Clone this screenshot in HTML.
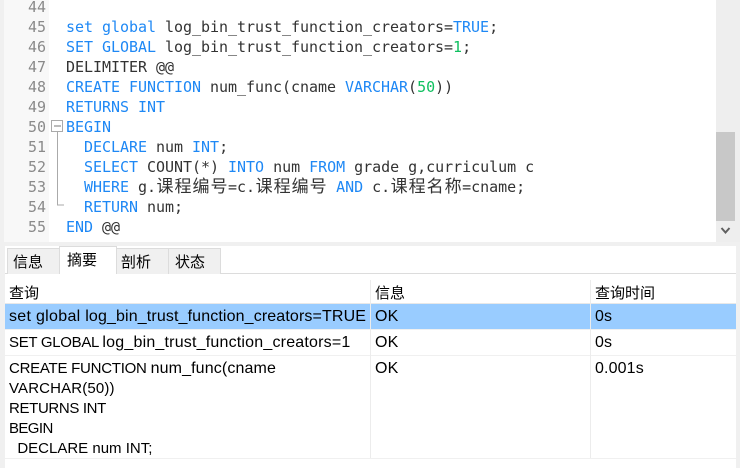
<!DOCTYPE html>
<html><head><meta charset="utf-8">
<style>
html,body{margin:0;padding:0;background:#f0f0f0;}
#r{position:relative;width:740px;height:468px;overflow:hidden;background:#f0f0f0;}
#r div{position:absolute;}
.ln{left:4px;width:42px;text-align:right;font:15px/20px "DejaVu Sans Mono","Noto Sans CJK SC",monospace;color:#8a8a8a;height:20px;white-space:pre;}
.c{left:66px;font:15px/20px "DejaVu Sans Mono","Noto Sans CJK SC",monospace;letter-spacing:-.03px;color:#333;height:20px;white-space:pre;}
.c b{font-weight:normal;color:#1e88f5;}
.c i{font-style:normal;color:#10c060;}
.cj{display:inline-block;width:18px;text-align:center;font-size:17px;line-height:20px;letter-spacing:0;}
.t{font:16px/20px "Liberation Sans","Noto Sans CJK SC",sans-serif;letter-spacing:.13px;color:#000;white-space:pre;height:20px;}
.t span{font-size:15px;letter-spacing:-.3px;}
.z{font-family:"Noto Sans CJK SC","Liberation Sans",sans-serif;font-size:15px;letter-spacing:0;}
.tab{box-sizing:border-box;border:1px solid #dcdcdc;border-bottom:none;background:#f0f0f0;text-align:center;font:15px/25px "Noto Sans CJK SC",sans-serif;color:#000;}
</style></head><body>
<div id="r">
<div style="left:4px;top:0;width:712px;height:242px;background:#fff"></div>
<div style="left:1px;top:0;width:48px;height:242px;background:#f8f8f8"></div>
<div style="left:0;top:0;width:4px;height:242px;background:#f0f0f0"></div>

<div class="ln" style="top:-3px">44</div>
<div class="ln" style="top:17px">45</div>
<div class="ln" style="top:37px">46</div>
<div class="ln" style="top:57px">47</div>
<div class="ln" style="top:77px">48</div>
<div class="ln" style="top:97px">49</div>
<div class="ln" style="top:117px">50</div>
<div class="ln" style="top:137px">51</div>
<div class="ln" style="top:157px">52</div>
<div class="ln" style="top:177px">53</div>
<div class="ln" style="top:197px">54</div>
<div class="ln" style="top:217px">55</div>

<div class="c" style="top:17px"><b>set global</b> log_bin_trust_function_creators=<b>TRUE</b>;</div>
<div class="c" style="top:37px"><b>SET GLOBAL</b> log_bin_trust_function_creators=<i>1</i>;</div>
<div class="c" style="top:57px">DELIMITER @@</div>
<div class="c" style="top:77px"><b>CREATE FUNCTION</b> num_func(cname <b>VARCHAR</b>(<i>50</i>))</div>
<div class="c" style="top:97px"><b>RETURNS INT</b></div>
<div class="c" style="top:117px"><b>BEGIN</b></div>
<div class="c" style="top:137px">  <b>DECLARE</b> num <b>INT</b>;</div>
<div class="c" style="top:157px">  <b>SELECT</b> COUNT(*) <b>INTO</b> num <b>FROM</b> grade g,curriculum c</div>
<div class="c" style="top:177px">  <b>WHERE</b> g.<span class="cj">课</span><span class="cj">程</span><span class="cj">编</span><span class="cj">号</span>=c.<span class="cj">课</span><span class="cj">程</span><span class="cj">编</span><span class="cj">号</span> <b>AND</b> c.<span class="cj">课</span><span class="cj">程</span><span class="cj">名</span><span class="cj">称</span>=cname;</div>
<div class="c" style="top:197px">  <b>RETURN</b> num;</div>
<div class="c" style="top:217px"><b>END</b> @@</div>

<svg style="position:absolute;left:50px;top:118px" width="16" height="90" viewBox="0 0 16 90">
<rect x="1.5" y="2.5" width="11" height="11" fill="#fff" stroke="#aaa"/>
<path d="M4 8H11" stroke="#777" fill="none"/>
<path d="M7.5 14V87H14" stroke="#aaa" fill="none"/>
</svg>

<div style="left:716px;top:0;width:24px;height:242px;background:#eee"></div>
<div style="left:716px;top:132px;width:19px;height:89px;background:#c8c8c8"></div>
<svg style="position:absolute;left:720px;top:226px" width="12" height="10" viewBox="0 0 12 10"><path d="M1.5 2L5.5 6.5L9.5 2" stroke="#606060" stroke-width="2" fill="none"/></svg>

<div style="left:5px;top:246px;width:731px;height:222px;background:#fff"></div>
<div style="left:5px;top:273px;width:731px;height:1px;background:#dcdcdc"></div>

<div class="tab" style="left:7px;top:248px;width:53px;height:26px;text-align:left;padding-left:5px;">信息</div>
<div class="tab" style="left:116px;top:248px;width:53px;height:26px;text-align:left;padding-left:4px;">剖析</div>
<div class="tab" style="left:168px;top:248px;width:53px;height:26px;text-align:left;padding-left:6px;">状态</div>
<div class="tab" style="left:59px;top:246px;width:58px;height:28px;background:#fff;line-height:26px;text-align:left;padding-left:7px;">摘要</div>

<div style="left:5px;top:303px;width:731px;height:26px;background:#99ccff"></div>
<div style="left:5px;top:303px;width:731px;height:1px;background:#e8e8e8"></div>
<div style="left:5px;top:329px;width:731px;height:1px;background:#f0f0f0"></div>
<div style="left:5px;top:355px;width:731px;height:1px;background:#f0f0f0"></div>
<div style="left:5px;top:458px;width:731px;height:1px;background:#f0f0f0"></div>
<div style="left:370px;top:280px;width:1px;height:178px;background:#ececec"></div>
<div style="left:590px;top:280px;width:1px;height:178px;background:#ececec"></div>

<div class="t z" style="left:9px;top:283px">查询</div>
<div class="t z" style="left:375px;top:283px">信息</div>
<div class="t z" style="left:595px;top:283px">查询时间</div>

<div class="t" style="left:9px;top:307px"><span style="font-size:16px;letter-spacing:.3px">set global </span>log_bin_trust_function_creators=TRUE</div>
<div class="t" style="left:375px;top:307px">OK</div>
<div class="t" style="left:595px;top:307px">0s</div>
<div class="t" style="left:9px;top:333px;letter-spacing:.2px"><span style="letter-spacing:-.3px">SET GLOBAL </span>log_bin_trust_function_creators=1</div>
<div class="t" style="left:375px;top:333px">OK</div>
<div class="t" style="left:595px;top:333px">0s</div>
<div class="t" style="left:9px;top:359px"><span style="letter-spacing:-.25px">CREATE FUNCTION </span>num_func(cname</div>
<div class="t" style="left:9px;top:379px"><span style="letter-spacing:.15px">VARCHAR(50))</span></div>
<div class="t" style="left:9px;top:399px"><span style="letter-spacing:-.35px">RETURNS INT</span></div>
<div class="t" style="left:9px;top:419px"><span style="letter-spacing:-.6px">BEGIN</span></div>
<div class="t" style="left:9px;top:439px"><span style="letter-spacing:0">  DECLARE num INT;</span></div>
<div class="t" style="left:375px;top:359px">OK</div>
<div class="t" style="left:595px;top:359px">0.001s</div>
</div>
</body></html>
